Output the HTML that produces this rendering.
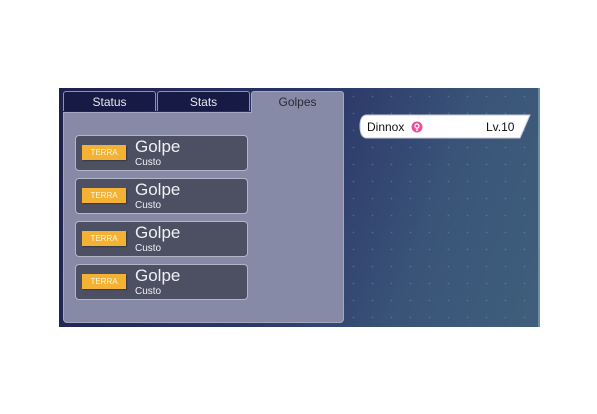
<!DOCTYPE html><html><head><style>
body{margin:0;width:597px;height:414px;background:#fff;position:relative;overflow:hidden;font-family:"Liberation Sans",sans-serif}
#g{position:absolute;left:59px;top:88px;width:479px;height:239px;border-right:2px solid #6f8fa6;
background-image:radial-gradient(circle,rgba(140,170,220,.3) 0.7px,transparent 1px),linear-gradient(110deg,#1d1f4c 0%,#2a3466 45%,#3a5478 75%,#3e5f7c 100%);background-size:19px 17px,100% 100%}
.tab{position:absolute;top:3px;height:20px;background:#171a44;border:1px solid #8e90b0;border-bottom:none;border-radius:3px 3px 0 0;color:#e8e8f0;font-size:12px;text-align:center;line-height:20px;box-sizing:border-box}
#panel{position:absolute;left:4px;top:24px;width:281px;height:211px;background:#878aa7;border:1px solid #a5a7c0;border-radius:0 0 4px 4px;box-sizing:border-box}
.card{position:absolute;left:11px;width:173px;height:36px;background:#4d4f62;border:1px solid #b4b6c8;border-radius:4px;box-sizing:border-box;color:#f0f0f5}
.b{position:absolute;left:6px;top:9px;width:44px;height:15px;background:#f4b234;color:#fff6dc;font-size:8px;text-align:center;line-height:15px;box-shadow:1px 1px 1px rgba(0,0,0,.3)}
.n{position:absolute;left:59px;top:1px;font-size:17px}
.c{position:absolute;left:59px;top:21px;font-size:10px}
</style></head><body>
<div id="g">
<div class="tab" style="left:4px;width:93px">Status</div>
<div class="tab" style="left:98px;width:93px">Stats</div>
<div class="tab" style="left:192px;width:93px;height:22px;background:#878aa7;border-color:#a5a7c0;color:#2a2a35;top:3px;z-index:2">Golpes</div>
<div id="panel">
<div class="card" style="top:22px"><div class="b">TERRA</div><div class="n">Golpe</div><div class="c">Custo</div></div>
<div class="card" style="top:65px"><div class="b">TERRA</div><div class="n">Golpe</div><div class="c">Custo</div></div>
<div class="card" style="top:108px"><div class="b">TERRA</div><div class="n">Golpe</div><div class="c">Custo</div></div>
<div class="card" style="top:151px"><div class="b">TERRA</div><div class="n">Golpe</div><div class="c">Custo</div></div>
</div>
<svg style="position:absolute;left:300px;top:26px" width="175" height="25"><path d="M8 1H171L161 24H8Q1 24 1 12Q1 1 8 1Z" fill="#fff" stroke="#c8c8d8"/>
<text x="8" y="17" font-size="12" font-family="Liberation Sans" fill="#111">Dinnox</text>
<circle cx="58" cy="13" r="5.5" fill="#ee4f9a"/><circle cx="58" cy="12" r="2" fill="none" stroke="#fff" stroke-width="1.2"/><path d="M58 14v3" stroke="#fff" stroke-width="1.2"/>
<text x="127" y="17" font-size="12" font-family="Liberation Sans" fill="#111">Lv.10</text></svg>
</div>
</body></html>
